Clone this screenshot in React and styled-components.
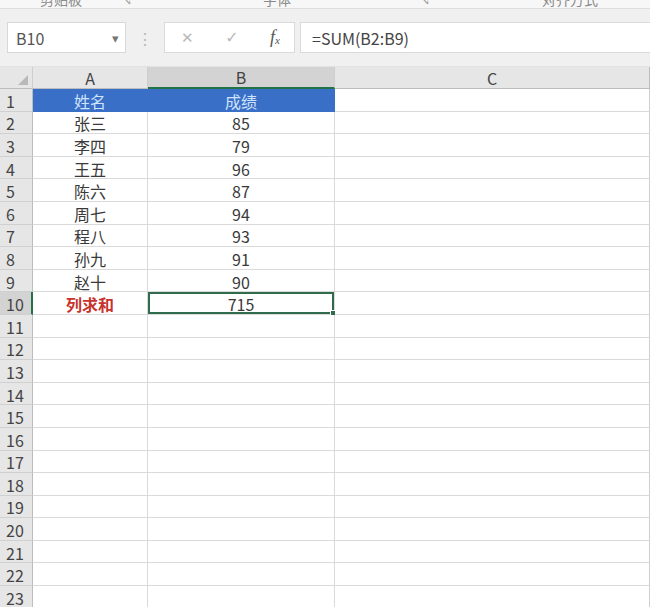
import React from "react";
import styled, { createGlobalStyle } from "styled-components";

const GlobalStyle = createGlobalStyle`
    html, body {
        margin: 0;
        padding: 0;
        background: #ffffff;
        overflow: hidden;
    }
    body {
        font-family: "Noto Sans CJK SC", "Noto Sans", sans-serif;
    }
`;

const rows = [
    ["姓名", "成绩"],
    ["张三", "85"],
    ["李四", "79"],
    ["王五", "96"],
    ["陈六", "87"],
    ["周七", "94"],
    ["程八", "93"],
    ["孙九", "91"],
    ["赵十", "90"],
    ["列求和", "715"],
];

const TOTAL_ROWS = 23;

function App() {
    const all = [];
    for (let i = 0; i < TOTAL_ROWS; i++) {
        all.push(rows[i] || ["", ""]);
    }
    return (
        <Page>
            <GlobalStyle />
            <Ribbon>
                <RibbonLabel $w={122}>剪贴板</RibbonLabel>
                <RibbonMark>↘</RibbonMark>
                <RibbonLabel $w={286}>字体</RibbonLabel>
                <RibbonMark>↘</RibbonMark>
                <RibbonLabel $w={276}>对齐方式</RibbonLabel>
            </Ribbon>
            <FormulaBar>
                <NameBox>
                    <span>B10</span>
                    <Caret>▾</Caret>
                </NameBox>
                <Dots>⋮</Dots>
                <ActionBox>
                    <Action>✕</Action>
                    <Action $small>✓</Action>
                    <Fx>
                        f<sub>x</sub>
                    </Fx>
                </ActionBox>
                <FormulaInput>=SUM(B2:B9)</FormulaInput>
            </FormulaBar>
            <Sheet>
                <Corner>
                    <svg width="10" height="10" viewBox="0 0 10 10">
                        <polygon points="10,0 10,10 0,10" fill="#b9b9b9" />
                    </svg>
                </Corner>
                <ColHead>A</ColHead>
                <ColHead $active>B</ColHead>
                <ColHead $last>C</ColHead>
                {all.map((r, i) => {
                    const n = i + 1;
                    const header = n === 1;
                    const total = n === 10;
                    return (
                        <React.Fragment key={n}>
                            <RowHead $active={total}>{n}</RowHead>
                            <Cell $header={header} $red={total}>
                                {r[0]}
                            </Cell>
                            <Cell $header={header} $selected={total}>
                                {r[1]}
                            </Cell>
                            <Cell $last />
                        </React.Fragment>
                    );
                })}
            </Sheet>
        </Page>
    );
}

const Page = styled.div`
    width: 650px;
    height: 607px;
    overflow: hidden;
    background: #fff;
`;

const Ribbon = styled.div`
    height: 8px;
    overflow: hidden;
    display: flex;
    background: #f7f7f7;
    border-bottom: 1px solid #dedede;
`;

const RibbonLabel = styled.div`
    width: ${(p) => p.$w}px;
    text-align: center;
    font-size: 14px;
    line-height: 14px;
    margin-top: -8px;
    color: #8a8a8a;
    flex-shrink: 0;
`;

const RibbonMark = styled.div`
    width: 12px;
    font-size: 10px;
    line-height: 10px;
    margin-top: -4px;
    color: #999;
    flex-shrink: 0;
`;

const FormulaBar = styled.div`
    height: 58px;
    box-sizing: border-box;
    background: #f0f0f0;
    display: flex;
    align-items: center;
    padding: 0 0 0 7px;
    border-bottom: 1px solid #e2e2e2;
`;

const NameBox = styled.div`
    width: 119px;
    height: 31px;
    box-sizing: border-box;
    background: #fff;
    border: 1px solid #d8d8d8;
    display: flex;
    align-items: center;
    justify-content: space-between;
    padding: 0 6px 0 8px;
    font-size: 16px;
    color: #555;
    flex-shrink: 0;
`;

const Caret = styled.span`
    font-size: 13px;
    color: #777;
`;

const Dots = styled.div`
    width: 38px;
    text-align: center;
    color: #b8b8b8;
    font-size: 16px;
    flex-shrink: 0;
`;

const ActionBox = styled.div`
    width: 131px;
    height: 31px;
    box-sizing: border-box;
    background: #fff;
    border: 1px solid #dadada;
    display: flex;
    align-items: center;
    justify-content: space-between;
    padding: 0 14px 0 16px;
    flex-shrink: 0;
`;

const Action = styled.span`
    color: #b9b9b9;
    font-size: ${(p) => (p.$small ? "16px" : "15px")};
    font-family: "DejaVu Sans", sans-serif;
`;

const Fx = styled.span`
    font-family: "Liberation Serif", serif;
    font-style: italic;
    font-size: 18px;
    color: #555;
    sub {
        font-size: 11px;
        vertical-align: -1px;
    }
`;

const FormulaInput = styled.div`
    flex: 1;
    margin-left: 5px;
    height: 31px;
    box-sizing: border-box;
    background: #fff;
    border: 1px solid #dadada;
    border-right: none;
    display: flex;
    align-items: center;
    padding-left: 11px;
    font-size: 16px;
    color: #444;
`;

const Sheet = styled.div`
    display: grid;
    grid-template-columns: 33px 115px 187px 1fr;
    grid-template-rows: 22px;
    grid-auto-rows: 22.6px;
    font-size: 16px;
    color: #3a3a3a;
`;

const Corner = styled.div`
    background: #e6e6e6;
    border-right: 1px solid #cfcfcf;
    border-bottom: 1px solid #bdbdbd;
    display: flex;
    align-items: flex-end;
    justify-content: flex-end;
    padding: 0 4px 3px 0;
`;

const ColHead = styled.div`
    background: ${(p) => (p.$active ? "#d3d3d3" : "#e6e6e6")};
    border-right: 1px solid ${(p) => (p.$last ? "#bdbdbd" : "#cfcfcf")};
    border-bottom: ${(p) => (p.$active ? "2px solid #217346" : "1px solid #bdbdbd")};
    display: flex;
    align-items: center;
    justify-content: center;
    color: #444;
    line-height: 1;
`;

const RowHead = styled.div`
    background: ${(p) => (p.$active ? "#d3d3d3" : "#e6e6e6")};
    border-right: ${(p) => (p.$active ? "2px solid #217346" : "1px solid #bdbdbd")};
    border-bottom: 1px solid #d0d0d0;
    display: flex;
    align-items: center;
    padding: 2px 0 0 6px;
    color: #444;
    line-height: 1;
`;

const Cell = styled.div`
    position: relative;
    display: flex;
    align-items: center;
    justify-content: center;
    line-height: 1;
    padding-top: 2px;
    border-right: 1px solid ${(p) => (p.$header ? "#3a6fc7" : "#dadada")};
    border-bottom: 1px solid ${(p) => (p.$header ? "#3a6fc7" : "#dadada")};
    background: ${(p) => (p.$header ? "#3a6fc7" : "#fff")};
    color: ${(p) => (p.$header ? "#cfe3fb" : p.$red ? "#c7332c" : "#3a3a3a")};
    font-weight: ${(p) => (p.$red ? 700 : 400)};
    ${(p) => p.$last && "border-right: 1px solid #cfcfcf;"}
    ${(p) =>
        p.$selected &&
        `
        box-shadow: inset 0 0 0 2px #2f6b4c;
        &::after {
            content: "";
            position: absolute;
            right: -3px;
            bottom: -3px;
            width: 5px;
            height: 5px;
            background: #2f6b4c;
            border: 1px solid #fff;
        }
    `}
`;

export default App;
